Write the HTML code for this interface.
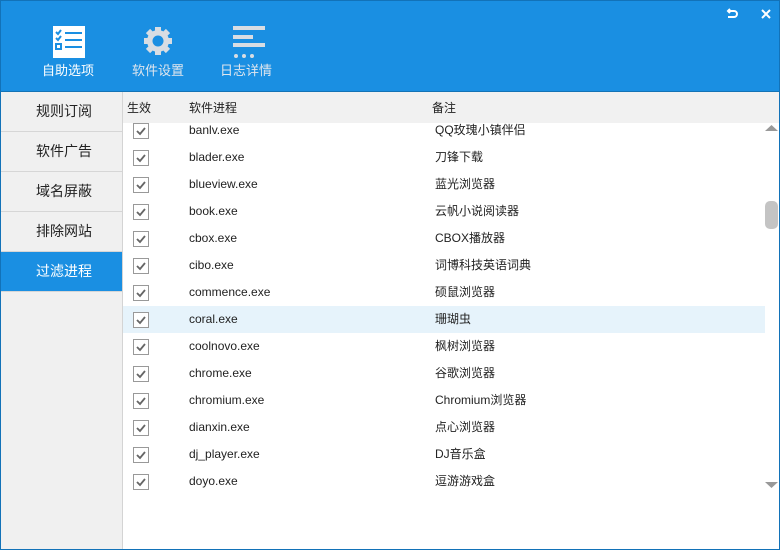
<!DOCTYPE html><html><head><meta charset="utf-8"><style>
*{margin:0;padding:0;box-sizing:border-box}
body{width:780px;height:550px;overflow:hidden;font-family:"Liberation Sans","Noto Sans CJK SC",sans-serif;font-size:12px;color:#222;background:#fff;position:relative}
.win{position:absolute;left:0;top:0;width:780px;height:550px;border:1px solid #1272b8}
.hdr{position:absolute;left:0;top:0;width:780px;height:92px;background:#1a8fe2;border:1px solid #1272b8;border-bottom:1px solid #1473b5}
.tb{position:absolute;top:59px;color:#fff;font-size:13px;text-align:center;width:80px}
.side{position:absolute;left:1px;top:92px;width:122px;height:457px;background:#f0f0f0;border-right:1px solid #d4d4d4}
.si{height:40px;line-height:39px;padding-left:35px;font-size:14px;border-bottom:1px solid #d6d6d6;color:#222}
.si.on{background:#1a8fe2;color:#fff}
.th{position:absolute;left:123px;top:92px;width:656px;height:31px;background:#f1f1f1}
.th span{position:absolute;top:7px;font-size:12px}
.row{position:absolute;left:123px;width:642px;height:27px;line-height:27px}
.row.hl{background:#e6f3fb}
.cb{position:absolute;left:10px;top:6px;width:16px;height:16px;border:1px solid #999;background:#fff}
.p{position:absolute;left:66px;top:0;font-size:12px}
.n{position:absolute;left:312px;top:0;font-size:12px}
</style></head><body>
<div class="hdr">
<svg style="position:absolute;left:52px;top:25px" width="32" height="32"><rect width="32" height="32" fill="#fff"/><g stroke="#1a8fe2" stroke-width="2" fill="none"><path d="M12 7h17M12 14h17M12 21h17"/><rect x="3" y="18" width="5" height="5"/><path d="M3 6l2 2 3-4M3 12l2 2 3-4"/></g></svg>
<svg style="position:absolute;left:141px;top:24px" width="32" height="32" viewBox="0 0 32 32"><g fill="#d8dde3"><circle cx="16" cy="16" r="11"/><g stroke="#d8dde3" stroke-width="6"><path d="M16 2v28M2 16h28M6 6l20 20M26 6L6 26"/></g></g><circle cx="16" cy="16" r="5.5" fill="#1a8fe2"/></svg>
<svg style="position:absolute;left:230px;top:24px" width="36" height="34"><g fill="#d8dde3"><rect x="2" y="1" width="32" height="4"/><rect x="2" y="10" width="20" height="4"/><rect x="2" y="18" width="32" height="4"/><circle cx="5" cy="31" r="2"/><circle cx="13" cy="31" r="2"/><circle cx="21" cy="31" r="2"/></g></svg>
<div class="tb" style="left:27px">自助选项</div>
<div class="tb" style="left:117px;color:#dfe6ee">软件设置</div>
<div class="tb" style="left:205px;color:#dfe6ee">日志详情</div>
<svg style="position:absolute;left:724px;top:6px" width="14" height="14"><path d="M3 4h6a3 3 0 010 6H3M5 2L3 4l2 2" stroke="#fff" stroke-width="2" fill="none"/></svg>
<svg style="position:absolute;left:759px;top:7px" width="12" height="12"><path d="M2 2l8 8M10 2l-8 8" stroke="#fff" stroke-width="2"/></svg>
</div>
<div class="side">
<div class="si">规则订阅</div><div class="si">软件广告</div><div class="si">域名屏蔽</div><div class="si">排除网站</div><div class="si on">过滤进程</div>
</div>
<div class="th"><span style="left:4px">生效</span><span style="left:66px">软件进程</span><span style="left:309px">备注</span></div>
<div id="rows"></div>
<svg style="position:absolute;left:765px;top:124px" width="13" height="8"><path d="M0 7L6.5 1 13 7z" fill="#999"/></svg>
<div style="position:absolute;left:765px;top:201px;width:13px;height:28px;border-radius:5px;background:#c4c4c4"></div>
<svg style="position:absolute;left:765px;top:481px" width="13" height="8"><path d="M0 1L6.5 7 13 1z" fill="#999"/></svg>
<script>
var d=[["banlv.exe","QQ玫瑰小镇伴侣"],["blader.exe","刀锋下载"],["blueview.exe","蓝光浏览器"],["book.exe","云帆小说阅读器"],["cbox.exe","CBOX播放器"],["cibo.exe","词博科技英语词典"],["commence.exe","硕鼠浏览器"],["coral.exe","珊瑚虫"],["coolnovo.exe","枫树浏览器"],["chrome.exe","谷歌浏览器"],["chromium.exe","Chromium浏览器"],["dianxin.exe","点心浏览器"],["dj_player.exe","DJ音乐盒"],["doyo.exe","逗游游戏盒"]];
var h="";d.forEach(function(r,i){var t=117+27*i;h+='<div class="row'+(i==7?' hl':'')+'" style="top:'+t+'px"><div class="cb"><svg width="14" height="14" style="position:absolute;left:0;top:0"><path d="M3 7l3 3 5-6" stroke="#666" stroke-width="1.8" fill="none"/></svg></div><span class="p">'+r[0]+'</span><span class="n">'+r[1]+'</span></div>'});
document.getElementById("rows").innerHTML=h;
</script>
<div class="win"></div>
</body></html>
